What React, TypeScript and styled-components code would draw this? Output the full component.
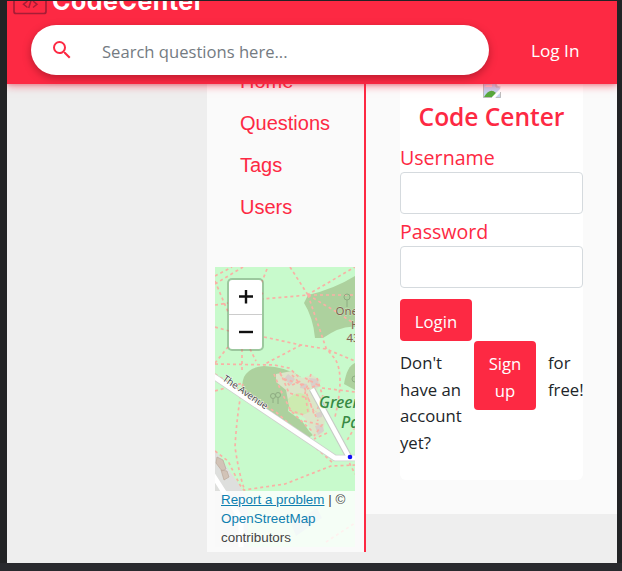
import React from 'react';
import styled, { createGlobalStyle } from 'styled-components';

const red = '#fd2943';
const ui = '"Open Sans", "Noto Sans", sans-serif';

const Global = createGlobalStyle`
  * { box-sizing: border-box; }
  body { margin: 0; background: #222326; overflow: hidden; }
`;

const Frame = styled.div`
  width: 622px;
  height: 571px;
  padding: 1px 5px 8px 7px;
  background: linear-gradient(#292a2e, #292a2e) bottom / 100% 8px no-repeat, #222325;
`;

const Page = styled.div`
  height: 562px;
  overflow: hidden;
  background: #eee;
  display: flex;
  flex-direction: column;
`;

const Header = styled.header`
  position: relative;
  z-index: 2;
  flex: none;
  height: 83px;
  background: ${red};
  box-shadow: 0 2px 8px rgba(253, 41, 67, 0.55), 0 1px 3px rgba(0, 0, 0, 0.12);
`;

const Brand = styled.div`
  display: flex;
  height: 24px;
  overflow: hidden;
  padding-left: 6px;
`;

const BrandName = styled.span`
  margin: -18px 0 0 4px;
  font: 700 25px/36px Inter, sans-serif;
  letter-spacing: 0.5px;
  color: #fff;
  white-space: nowrap;
`;

const HeaderRow = styled.div`
  display: flex;
  align-items: center;
  padding-left: 24px;
`;

const SearchBox = styled.label`
  width: 458px;
  height: 50px;
  border-radius: 25px;
  background: #fff;
  box-shadow: 0 3px 8px rgba(60, 0, 10, 0.35);
  display: flex;
  align-items: center;
  padding-left: 19px;
  svg { flex: none; }
`;

const SearchInput = styled.input`
  margin-left: 28px;
  padding: 3px 0 0;
  flex: 1;
  min-width: 0;
  border: 0;
  outline: 0;
  background: transparent;
  font: 400 16.6px/26px ${ui};
  &::placeholder { color: #747b82; opacity: 1; }
`;

const LoginLink = styled.a`
  margin-left: 42px;
  padding-top: 2px;
  font: 400 17.2px/26px ${ui};
  color: #fff;
`;

const Body = styled.div`
  display: grid;
  grid-template-columns: 159px 251px;
  padding-left: 200px;
  align-items: start;
`;

const Sidebar = styled.aside`
  height: 468px;
  padding: 0 7px 0 8px;
  background: #fafafa;
  border-right: 2px solid ${red};
`;

const Nav = styled.nav`
  height: 183px;
  padding-left: 25px;
  display: flex;
  flex-direction: column;
  overflow: hidden;
`;

const NavItem = styled.a`
  flex: none;
  height: 42px;
  font: 400 20px/42px "Liberation Sans", Arial, sans-serif;
  color: ${red};
  &:first-child { margin-top: -24px; }
`;

const MapBox = styled.div`
  position: relative;
  width: 140px;
  height: 280px;
  overflow: hidden;
  > svg { display: block; }
`;

const ZoomControl = styled.div`
  position: absolute;
  left: 12px;
  top: 11px;
  width: 37px;
  height: 73px;
  border: 2px solid rgba(90, 125, 90, 0.4);
  border-radius: 5px;
  background: #fff;
  background-clip: padding-box;
`;

const ZoomButton = styled.div`
  height: 34px;
  display: flex;
  align-items: center;
  justify-content: center;
  & + & { border-top: 1px solid #ccc; height: 35px; }
`;

const Attribution = styled.div`
  position: absolute;
  inset: 224px 0 0 0;
  padding-left: 6px;
  background: rgba(255, 255, 255, 0.82);
  font: 400 13.4px/19px "Liberation Sans", Arial, sans-serif;
  color: #444;
  white-space: nowrap;
`;

const AttributionText = styled.div`
  margin-top: -1px;
`;

const MapLink = styled.a<{ $underlined?: boolean }>`
  color: #0e7fb0;
  text-decoration: ${(p) => (p.$underlined ? 'underline' : 'none')};
`;

const Main = styled.main`
  height: 430px;
  background: #fafafa;
  padding-left: 34px;
`;

const Card = styled.section`
  width: 183px;
  height: 396px;
  background: #fff;
  border-radius: 0 0 6px 6px;
  font-family: ${ui};
`;

const BrokenImage = styled.div`
  height: 14px;
  padding-left: 82px;
  svg { display: block; }
`;

const Title = styled.h1`
  margin: 0;
  height: 46px;
  font: 600 24.6px/37px ${ui};
  letter-spacing: -0.05px;
  color: ${red};
  text-align: center;
  white-space: nowrap;
`;

const Field = styled.label`
  display: block;
  height: 74px;
  font-size: 19.6px;
  line-height: 28px;
  color: ${red};
`;

const Input = styled.input`
  display: block;
  width: 183px;
  height: 42px;
  border: 1px solid #d5dade;
  border-radius: 4px;
  background: #fff;
`;

const Button = styled.button<{ $w: number; $h: number }>`
  flex: none;
  display: block;
  width: ${(p) => p.$w}px;
  height: ${(p) => p.$h}px;
  padding: 2px 0 0;
  border: 0;
  border-radius: 4px;
  background: ${red};
  color: #fff;
  font: 400 16.7px/27px ${ui};
`;

const Actions = styled.div`
  padding-top: 7px;
`;

const SignupRow = styled.div`
  display: flex;
  align-items: flex-start;
  font-size: 16.7px;
  line-height: 26.7px;
  color: #212529;
  white-space: nowrap;
`;

const Copy = styled.span<{ $w: number }>`
  flex: none;
  width: ${(p) => p.$w}px;
  padding-top: 9px;
  &:last-child { margin-left: 12px; }
`;

const LogoIcon = () => (
  <svg width="35" height="14" viewBox="0 0 35 14" fill="none" stroke="#a61d36">
    <path d="M1 -8V10.5Q1 12.5 3 12.5H31Q33 12.5 33 10.5V-8" strokeWidth="1.7" />
    <path d="M14.5 0L10.5 3.3L14.5 6.5M20 0L24 3.3L20 6.5M18.5 -2L15.7 7" strokeWidth="1.5" />
  </svg>
);

const SearchIcon = () => (
  <svg width="24" height="24" viewBox="0 0 24 24" fill={red}>
    <path d="M15.5 14h-.79l-.28-.27A6.47 6.47 0 0 0 16 9.5 6.5 6.5 0 1 0 9.5 16c1.61 0 3.09-.59 4.23-1.57l.27.28v.79l5 4.99L20.49 19l-4.99-5zm-6 0a4.5 4.5 0 1 1 0-9 4.5 4.5 0 0 1 0 9z" />
  </svg>
);

const ParkMap = () => (
  <svg width="140" height="280" viewBox="0 0 140 280">
    <rect width="140" height="280" fill="#c8facc" />
    <g fill="#add19e">
      <path d="M93 28Q119 22 140 9V60Q127 58 108 71L100 71Q98 50 89 36Z" />
      <path d="M140 96Q132 99 129 117L140 123Z" />
      <path d="M29 110Q34 100 49 99Q72 100 86 110L77 123L73 144L87 154L94 164L98 168L93 171L28 126Q26 117 29 110Z" />
    </g>
    <path d="M61 107L77 104L87 111L97 108L106 113L101 126L112 140L108 166L99 171L90 151L75 144L71 123L61 115Z" fill="#dbe6c8" />
    <path d="M73 132Q83 121 93 130L95 145Q84 151 75 144Z" fill="#cdebb0" />
    <path d="M0 183L23 216L33 234V280H0Z" fill="#dedfdd" />
    <g fill="#d2c3b7" stroke="#bca99b" strokeWidth=".7">
      <path d="M2 190L8 193L11 202L7 204L1 196ZM6 203L12 204L14 210L9 213Z" />
    </g>
    <g fill="#d9cfca">
      <path d="M73 107L80 112L76 118L69 112ZM94 111L103 112L104 120L97 121ZM100 159L107 157L109 164L103 168ZM86 116L92 117L91 122L85 121ZM101 146L108 144L107 150L102 151Z" />
    </g>
    <g fill="none" stroke="#f9b1a5" strokeWidth="1.7" strokeDasharray="3 3">
      <path d="M0 17L28 0M0 9L17 0M0 14L13 45M52 2L46 17M75 0L93 28L48 32M48 27L36 18M92 28L140 0M93 28L140 28M93 28L120 44L140 57M93 28L111 81L120 92Q130 107 120 150M0 60L14 64M49 70L86 78L111 82L140 94M86 78L48 98M0 96L13 80M0 97L59 98L74 101L85 111M27 82V103M35 82L41 94M0 38L13 36" />
      <path d="M0 124L28 116Q22 145 20 180Q24 207 29 221M0 184L13 194L25 218L29 223L70 217L116 199L140 198M0 107L62 146L119 197M107 121L140 125M106 130L114 155L140 207M59 107L66 124L76 144L98 165M65 105L74 126L93 131L103 154M77 108L90 122L99 147M96 107L90 126L93 145M102 111L108 130L101 145M65 107L75 119L86 114M112 166L99 172" />
      <path d="M90 111L103 118L92 122M89 154L107 158L99 169M69 112L90 118M74 143L89 148M140 160L131 175M111 275L140 256" />
    </g>
    <g fill="none" strokeLinejoin="round">
      <path d="M-2 109L120 191H142" stroke="#ced0cd" strokeWidth="6.5" />
      <path d="M97 122L135 192" stroke="#c6cbc5" strokeWidth="6.8" />
      <path d="M-2 109L120 191H142" stroke="#fff" strokeWidth="5" />
      <path d="M97 122L135 192" stroke="#fff" strokeWidth="4.6" />
      <path d="M-2 208L26 252V280" stroke="#fff" strokeWidth="5" />
    </g>
    <g fill="none" stroke="#8eac82">
      <circle cx="132" cy="30" r="3" /><path d="M132 33V40" />
      <circle cx="58" cy="129" r="2.5" /><circle cx="63" cy="128" r="2.5" />
      <path d="M58 132V136M63 131V137" />
      <circle cx="140" cy="112" r="3" />
    </g>
    <path d="M76 257L102 241L107 251L81 269Z" fill="#b8d9d0" />
    <circle cx="135" cy="190" r="2.3" fill="#1010f4" />
    <g fontFamily="Noto Sans, sans-serif" fontSize="11.5" fill="#7d6350" stroke="#d3e6c6" strokeWidth=".8" paintOrder="stroke">
      <text x="120.5" y="48">One</text>
      <text x="136" y="62">H</text>
      <text x="131.5" y="75">43</text>
    </g>
    <g fontFamily="Noto Sans, sans-serif" fontStyle="italic" fontWeight="500" fontSize="16" fill="#368b43" stroke="#d5f4d4" strokeWidth="1" paintOrder="stroke">
      <text x="104" y="141">Green</text>
      <text x="126" y="161">Pa</text>
    </g>
    <text transform="translate(7 113) rotate(34.5)" fontFamily="Noto Sans, sans-serif" fontSize="9.5" fill="#444" stroke="#fff" strokeWidth="1" paintOrder="stroke">The Avenue</text>
  </svg>
);

const BrokenIcon = () => (
  <svg width="20" height="14" viewBox="0 0 20 14">
    <path d="M1 0H14L19 5V14H1Z" fill="#c5d5f4" />
    <path d="M3 3Q4 0 7 1L10 0V3Z" fill="#ffd2d8" />
    <path d="M2 13Q8 3 14 9L12 13Z" fill="#55aa3d" />
    <path d="M9 14L19 4V8L13 14Z" fill="#fff" />
    <path d="M1.5 0V13.5H10M14 0V3H18.5M18.5 8V13.5H14" fill="none" stroke="#bebebe" />
  </svg>
);

export default function App() {
  return (
    <>
      <Global />
      <Frame>
        <Page>
          <Header>
            <Brand>
              <LogoIcon />
              <BrandName>CodeCenter</BrandName>
            </Brand>
            <HeaderRow>
              <SearchBox>
                <SearchIcon />
                <SearchInput placeholder="Search questions here..." />
              </SearchBox>
              <LoginLink>Log In</LoginLink>
            </HeaderRow>
          </Header>
          <Body>
            <Sidebar>
              <Nav>
                {['Home', 'Questions', 'Tags', 'Users'].map((name) => (
                  <NavItem key={name}>{name}</NavItem>
                ))}
              </Nav>
              <MapBox>
                <ParkMap />
                <ZoomControl>
                  <ZoomButton>
                    <svg width="14" height="14" stroke="#111" strokeWidth="2.4"><path d="M0 6.5H14M7 0V13.5" /></svg>
                  </ZoomButton>
                  <ZoomButton>
                    <svg width="14" height="14" stroke="#111" strokeWidth="2.4"><path d="M0 7H14" /></svg>
                  </ZoomButton>
                </ZoomControl>
                <Attribution>
                  <AttributionText>
                    <MapLink $underlined>Report a problem</MapLink> | ©<br />
                    <MapLink>OpenStreetMap</MapLink><br />
                    contributors
                  </AttributionText>
                </Attribution>
              </MapBox>
            </Sidebar>
            <Main>
              <Card>
                <BrokenImage><BrokenIcon /></BrokenImage>
                <Title>Code Center</Title>
                <Field>Username<Input /></Field>
                <Field>Password<Input type="password" /></Field>
                <Actions>
                  <Button $w={72} $h={42}>Login</Button>
                  <SignupRow>
                    <Copy $w={74}>Don't<br />have an<br />account<br />yet?</Copy>
                    <Button $w={62} $h={69}>Sign<br />up</Button>
                    <Copy $w={35}>for<br />free!</Copy>
                  </SignupRow>
                </Actions>
              </Card>
            </Main>
          </Body>
        </Page>
      </Frame>
    </>
  );
}
